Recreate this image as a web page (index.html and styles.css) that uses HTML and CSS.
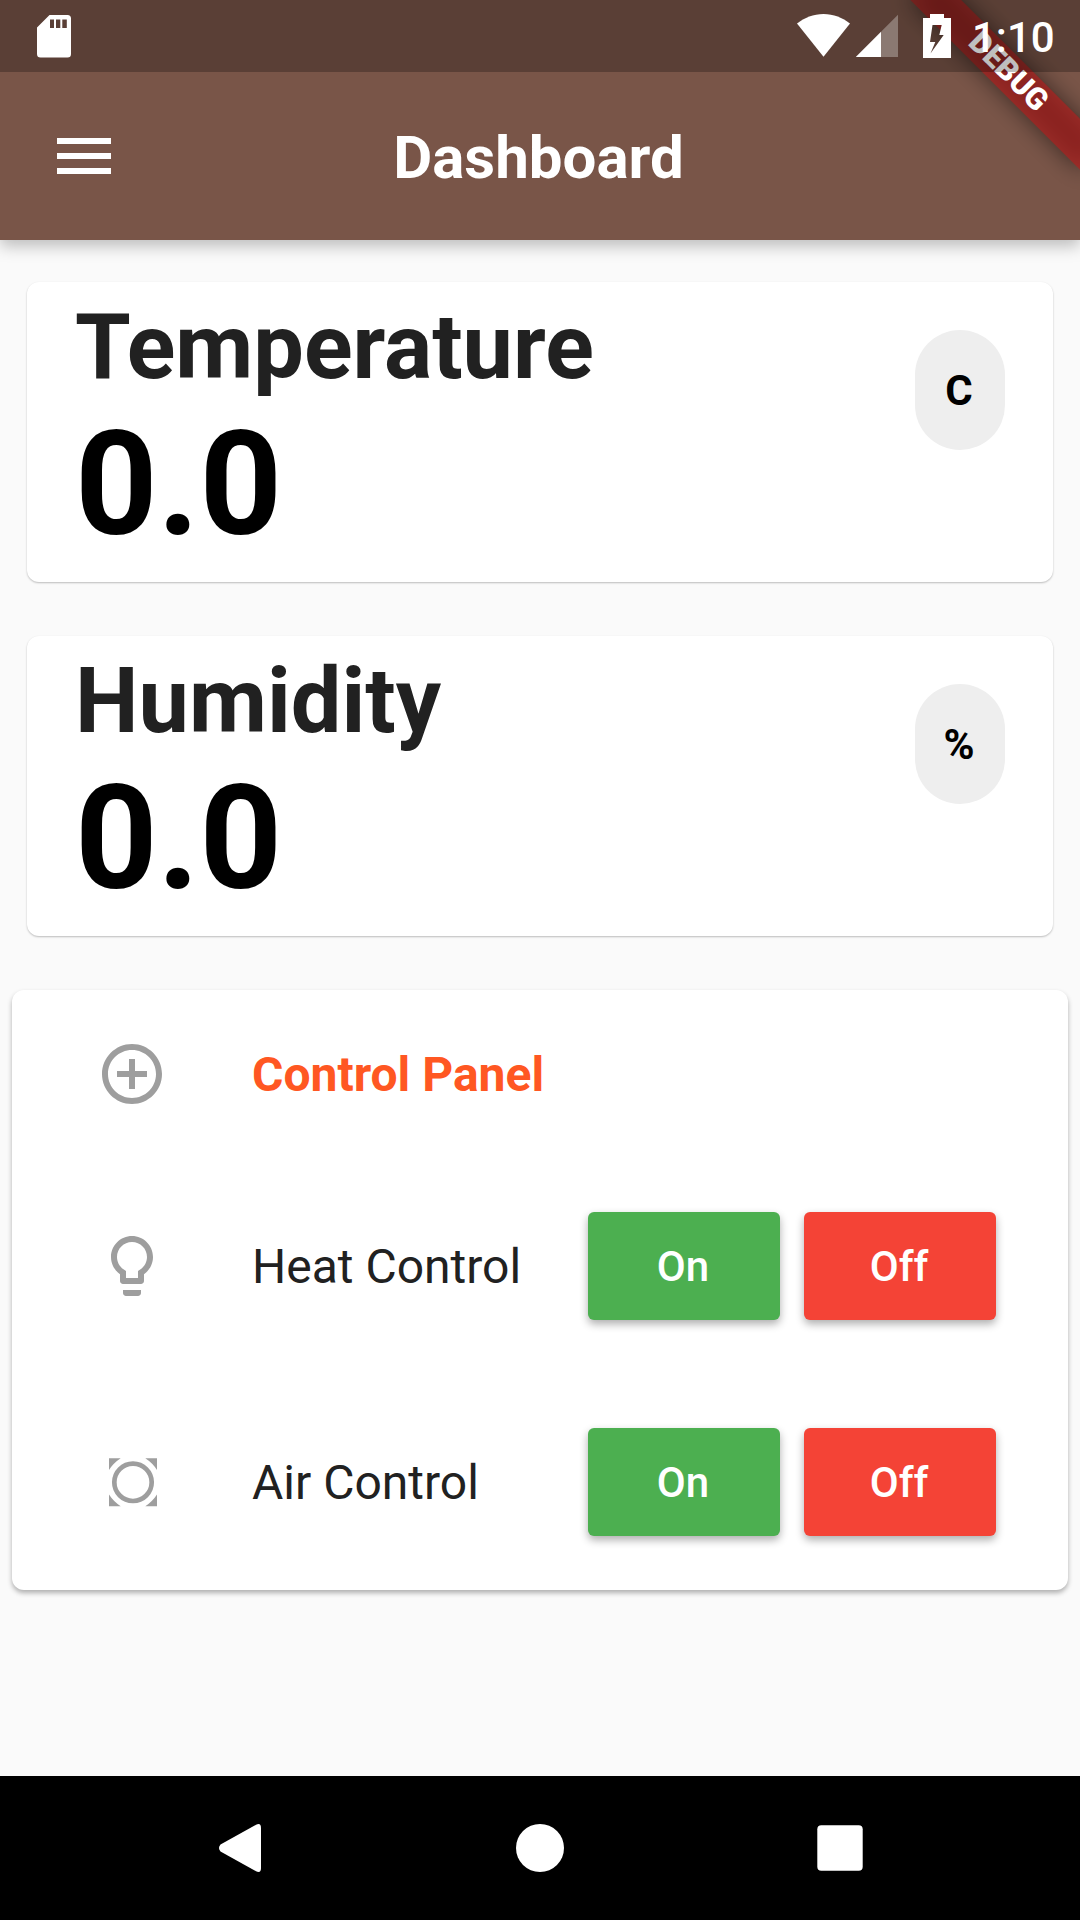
FILE: index.html
```html
<!DOCTYPE html>
<html lang="en">
<head>
<meta charset="utf-8">
<title>Dashboard</title>
<link rel="stylesheet" href="styles.css">
</head>
<body>
<div class="screen">
  <header class="app-header">
    <div class="status-bar">
      <svg class="sd-icon" width="34" height="43" viewBox="0 0 34 43"><path fill="#fff" fill-rule="evenodd" d="M12.500 0H30.500a3.500 3.500 0 0 1 3.500 3.500V39a3.500 3.500 0 0 1-3.500 3.500H3.500A3.500 3.500 0 0 1 0 39V12.500ZM13 4.500V13h4V4.500ZM19 4.500V13h4.300V4.500ZM25.300 4.500V13h4.500V4.500Z"/></svg>
      <div class="status-right">
        <svg class="wifi-icon" width="53" height="43" viewBox="0 0 53 43"><path fill="#fff" d="M26.500 42.700 0 9.600C7.500 3.500 16.500 0 26.500 0S45.500 3.500 53 9.600Z"/></svg>
        <svg class="signal-icon" width="42" height="43" viewBox="0 0 42 43"><path fill="#fff" fill-opacity=".3" d="M25 17.700 42 .7V43H25Z"/><path fill="#fff" d="M-.3 43 25 17.700V43Z"/></svg>
        <svg class="battery-icon" width="28" height="44" viewBox="0 0 28 44"><path fill="#fff" fill-rule="evenodd" d="M7 0H21V4H28V44H0V4H7ZM9.500 11 7 28H12.300L7.500 39.500 20.700 21H16.300L18.700 11Z"/></svg>
        <span class="clock">1:10</span>
      </div>
    </div>
    <div class="app-bar">
      <svg class="menu-icon" width="72" height="72" viewBox="0 0 24 24"><path fill="#fff" d="M3 18h18v-2H3v2zm0-5h18v-2H3v2zm0-7v2h18V6H3z"/></svg>
      <h1 class="title">Dashboard</h1>
    </div>
    <div class="debug-corner"><div class="debug-banner"><span>DEBUG</span></div></div>
  </header>

  <main class="content">
    <section class="card reading">
      <div>
        <h2 class="reading-name">Temperature</h2>
        <div class="reading-value">0.0</div>
      </div>
      <div class="chip">C</div>
    </section>
    <section class="card reading">
      <div>
        <h2 class="reading-name">Humidity</h2>
        <div class="reading-value">0.0</div>
      </div>
      <div class="chip">%</div>
    </section>
    <section class="card panel">
      <div class="row row-head">
        <svg class="row-icon" width="72" height="72" viewBox="0 0 24 24"><path fill="#9e9e9e" d="M13 7h-2v4H7v2h4v4h2v-4h4v-2h-4V7zm-1-5C6.480 2 2 6.480 2 12s4.480 10 10 10 10-4.480 10-10S17.520 2 12 2zm0 18c-4.410 0-8-3.590-8-8s3.590-8 8-8 8 3.590 8 8-3.590 8-8 8z"/></svg>
        <span class="label label-head">Control Panel</span>
      </div>
      <div class="row">
        <svg class="row-icon" width="72" height="72" viewBox="0 0 24 24"><path fill="#9e9e9e" d="M9 21c0 .55.45 1 1 1h4c.55 0 1-.45 1-1v-1H9v1zm3-19C8.140 2 5 5.140 5 9c0 2.380 1.190 4.470 3 5.740V17c0 .55.45 1 1 1h6c.55 0 1-.45 1-1v-2.260c1.810-1.270 3-3.360 3-5.740 0-3.860-3.140-7-7-7zm2.850 11.100l-.85.6V16h-4v-2.300l-.85-.6C7.800 12.160 7 10.630 7 9c0-2.760 2.240-5 5-5s5 2.240 5 5c0 1.630-.8 3.160-2.150 4.100z"/></svg>
        <span class="label">Heat Control</span>
        <button class="btn btn-on">On</button>
        <button class="btn btn-off">Off</button>
      </div>
      <div class="row">
        <svg class="row-icon" width="72" height="72" viewBox="0 0 72 72"><circle cx="37" cy="36.300" r="18.700" fill="none" stroke="#9e9e9e" stroke-width="4.700"/><path fill="#9e9e9e" d="M13 12.300h11.700Q17.500 17 13 24ZM61 12.300V24Q56.500 17 49.300 12.300ZM13 60.300V48.600Q17.500 55.600 24.700 60.300ZM61 60.300H49.300Q56.500 55.600 61 48.600Z"/></svg>
        <span class="label">Air Control</span>
        <button class="btn btn-on">On</button>
        <button class="btn btn-off">Off</button>
      </div>
    </section>
  </main>

  <nav class="nav-bar">
    <svg width="48" height="48" viewBox="0 0 48 48"><path fill="#fff" d="M4.500 20.500 40 .8Q45 -1.500 45 4V44Q45 49.500 40 47.200L4.500 27.500Q1.500 24 4.500 20.500Z"/></svg>
    <svg width="48" height="48" viewBox="0 0 48 48"><circle cx="24" cy="24" r="24" fill="#fff"/></svg>
    <svg width="48" height="48" viewBox="0 0 48 48"><rect x="1.300" y="1.300" width="45.400" height="45.400" rx="4" fill="#fff"/></svg>
  </nav>
</div>
</body>
</html>
```

FILE: styles.css
```css
* { box-sizing: border-box; }

body {
  margin: 0;
  background: #fafafa;
  font-family: Roboto, "Liberation Sans", sans-serif;
}

.screen {
  width: 1080px;
  height: 1920px;
  display: flex;
  flex-direction: column;
  overflow: hidden;
}

.app-header {
  position: relative;
  height: 240px;
  background: #795548;
  box-shadow: 0 6px 15px rgba(0, 0, 0, .25);
}

.status-bar {
  position: relative;
  z-index: 2;
  height: 72px;
  padding: 0 24px 0 37px;
  display: flex;
  justify-content: space-between;
  background: rgba(0, 0, 0, .25);
}

.sd-icon { margin-top: 15px; }

.status-right { display: flex; align-items: flex-start; }
.wifi-icon { margin: 14px 6px 0 0; }
.signal-icon { margin: 14px 25px 0 0; }
.battery-icon { margin: 14px 21px 0 0; }

.clock {
  width: 84px;
  color: #fff;
  font-size: 42px;
  font-weight: 500;
  line-height: 76px;
}

.app-bar {
  height: 168px;
  padding: 0 48px;
  display: grid;
  grid-template-columns: 72px 1fr 72px;
  align-items: center;
}

.menu-icon { display: block; }

.title {
  margin: 0;
  padding: 4px 3px 0 0;
  color: #fff;
  font-size: 60px;
  font-weight: 700;
  line-height: 70px;
  text-align: center;
}

.debug-corner {
  position: absolute;
  top: 0;
  right: 0;
  width: 240px;
  height: 240px;
  overflow: hidden;
}

.debug-banner {
  position: absolute;
  top: 84px;
  left: 120px;
  width: 240px;
  height: 36px;
  transform: rotate(45deg);
  transform-origin: 120px -84px;
  color: #fff;
  font-size: 30.6px;
  font-weight: 900;
  line-height: 34px;
  text-align: center;
}

.debug-banner::before,
.debug-banner::after {
  content: "";
  position: absolute;
  inset: 0;
}

.debug-banner::before { background: rgba(0, 0, 0, .5); filter: blur(11.9px); }
.debug-banner::after { background: rgba(183, 28, 28, .63); }
.debug-banner span { position: relative; z-index: 1; }

.content { flex: 1; padding: 42px 12px 0; }

.card {
  background: #fff;
  border-radius: 12px;
}

.reading {
  height: 300px;
  margin: 0 15px 54px;
  padding: 13px 48px 0;
  display: flex;
  justify-content: space-between;
  box-shadow: 0 1px 2px rgba(0, 0, 0, .25);
}

.reading-name {
  margin: 0;
  color: #212121;
  font-size: 90px;
  font-weight: 700;
  line-height: 106px;
}

.reading-value {
  margin-top: -1px;
  color: #000;
  font-size: 144px;
  font-weight: 700;
  line-height: 169px;
}

.chip {
  width: 90px;
  height: 120px;
  margin-top: 35px;
  padding-right: 2px;
  border-radius: 45px;
  background: #eee;
  color: #000;
  font-size: 42px;
  font-weight: 700;
  line-height: 122px;
  text-align: center;
}

.panel { box-shadow: 0 3px 5px rgba(0, 0, 0, .3); }

.row {
  height: 216px;
  padding: 0 72px 0 84px;
  display: flex;
  align-items: center;
}

.row-head { height: 168px; }
.row-icon { flex: none; margin-right: 84px; }

.label {
  flex: 1;
  padding-top: 2px;
  color: #212121;
  font-size: 48px;
  line-height: 56px;
  white-space: nowrap;
}

.label-head { color: #ff5722; font-weight: 700; }

.btn {
  width: 192px;
  height: 108px;
  padding: 2px 2px 0 0;
  border: 0;
  border-radius: 6px;
  color: #fff;
  font: 500 42px/106px Roboto, "Liberation Sans", sans-serif;
  box-shadow: 0 4px 8px rgba(0, 0, 0, .32);
}

.btn-on { background: #4caf50; margin-right: 24px; }
.btn-off { background: #f44336; }

.nav-bar {
  height: 144px;
  padding: 0 216px;
  display: flex;
  justify-content: space-between;
  align-items: center;
  background: #000;
}
```
